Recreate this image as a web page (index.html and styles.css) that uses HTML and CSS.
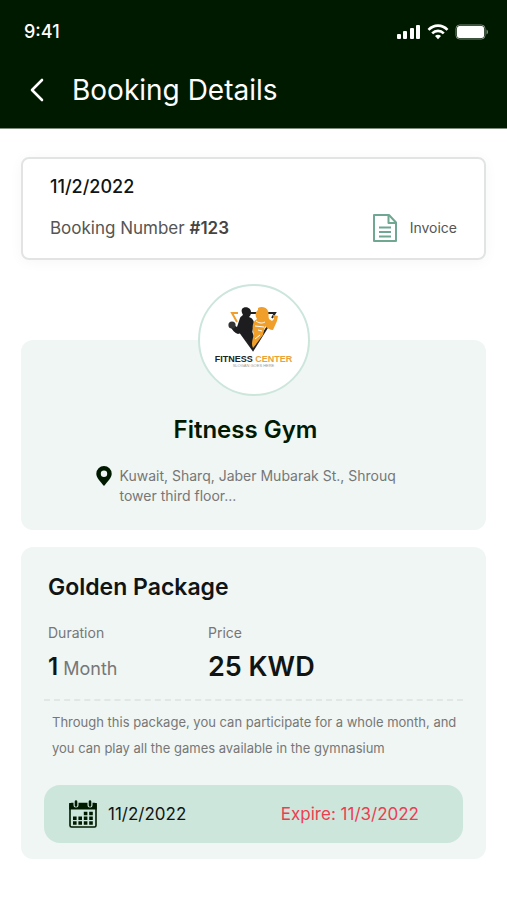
FILE: index.html
```html
<!DOCTYPE html>
<html lang="en">

<head>
    <meta charset="UTF-8">
    <meta name="viewport" content="width=device-width, initial-scale=1.0">
    <title>Booking Details</title>
    <link rel="stylesheet" href="styles.css">
</head>

<body>
    <header class="header">
        <div class="status-bar">
            <span class="time">9:41</span>
            <div class="status-icons">
                <svg width="24" height="16" viewBox="0 0 24 16" fill="#fff" aria-hidden="true">
                    <rect x="0" y="10" width="4" height="5" rx="1" />
                    <rect x="6" y="7" width="4" height="8" rx="1" />
                    <rect x="13" y="4" width="4" height="11" rx="1" />
                    <rect x="19" y="1" width="4" height="14" rx="1" />
                </svg>
                <svg width="22" height="16" viewBox="0 0 22 16" fill="none" stroke="#fff" stroke-width="2.6" aria-hidden="true">
                    <path d="M1.5 5.8C6.8.2 15.2.2 20.5 5.8" />
                    <path d="M5.2 9.300c3.300-3.300 8.300-3.300 11.600 0" />
                    <path d="M8 11.900c1.800-1.500 4.200-1.500 6 0l-3 3.300z" fill="#fff" stroke="none" />
                </svg>
                <svg width="34" height="16" viewBox="0 0 34 16" aria-hidden="true">
                    <rect x="1" y="1" width="29" height="14" rx="3.5" fill="none" stroke="#7d8c7d" />
                    <rect x="2" y="2" width="27" height="12" rx="2.5" fill="#fff" />
                    <path d="M31.5 5.500c2 .8 2 4.200 0 5z" fill="#7d8c7d" />
                </svg>
            </div>
        </div>
        <div class="title-bar">
            <a href="#" class="back" aria-label="Back">
                <svg width="16" height="24" viewBox="0 0 16 24" fill="none" stroke="#fff" stroke-width="2.6" stroke-linecap="round" stroke-linejoin="round">
                    <path d="M14 2L4 12l10 10" />
                </svg>
            </a>
            <h1>Booking Details</h1>
        </div>
    </header>

    <main>
        <section class="booking-card">
            <p class="booking-date">11/2/2022</p>
            <div class="booking-row">
                <p>Booking Number <strong>#123</strong></p>
                <a href="#" class="invoice">
                    <svg width="26" height="28" viewBox="0 0 26 28" fill="none" stroke="#6fa793" stroke-width="2" stroke-linejoin="round" aria-hidden="true">
                        <path d="M2 1h15l7 7.500V27H2z" />
                        <path d="M16.500 1v8H24M7 13.500h12M7 18h12M7 22.500h12" />
                    </svg>
                    Invoice
                </a>
            </div>
        </section>

        <section class="gym-card">
            <div class="gym-logo">
                <svg width="52" height="48" viewBox="0 0 52 46" aria-hidden="true">
                    <path d="M10 6H4l5 9" fill="none" stroke="#f0a02a" stroke-width="2" />
                    <path d="M17 6h30l-3 5M12 25l13 18 15-24" fill="none" stroke="#222" stroke-width="2" />
                    <path d="M14 27c3 3 8 12 11 16l3-9-5-12z" fill="#1d1d1f" />
                    <path d="M14 2c2-3 9-2 9 3 0 3-1 4-2 5 3 1 5 3 5 7l-2 9-1 9c-4-2-8-4-10-9l-3 1c-3-1-6-4-8-8l2-2 5 3 3-9c1-2 2-2 3-3-1-2-2-4-1-6z" fill="#1d1d1f" />
                    <circle cx="4" cy="18" r="3.6" fill="#333" />
                    <path d="M30 1c3-2 9-1 10 3 1 2 0 5 1 8l3 2 2-2-1-4 5 1-1 5-4 9c-3 0-6-2-8-4l-2 9-10 13c-3-6 2-11 0-17-1-5 0-10 4-12-2-3-2-7 1-9z" fill="#f0a02a" />
                    <path d="M28 14c4 3 7 2 9 1M27 19l9 1M30 23l4 1M27 32l5-4" fill="none" stroke="#fff" />
                </svg>
                <p class="logo-name">FITNESS <span>CENTER</span></p>
                <p class="logo-slogan">SLOGAN GOES HERE</p>
            </div>
            <h2>Fitness Gym</h2>
            <div class="address">
                <svg width="16" height="20" viewBox="0 0 16 20" fill="#001a00" fill-rule="evenodd" aria-hidden="true">
                    <path d="M8 0a7.700 7.700 0 0 0-7.700 7.700C.3 12 4.500 15.500 8 20c3.500-4.500 7.700-8 7.700-12.300A7.700 7.700 0 0 0 8 0zm0 4.500a3.200 3.200 0 1 1 0 6.400 3.200 3.200 0 0 1 0-6.400z" />
                </svg>
                <p>Kuwait, Sharq, Jaber Mubarak St., Shrouq tower third floor...</p>
            </div>
        </section>

        <section class="package-card">
            <h2>Golden Package</h2>
            <dl class="package-info">
                <div>
                    <dt>Duration</dt>
                    <dd><strong>1</strong> Month</dd>
                </div>
                <div>
                    <dt>Price</dt>
                    <dd class="price">25 KWD</dd>
                </div>
            </dl>
            <p class="description">Through this package, you can participate for a whole month, and you can play all the games available in the gymnasium</p>
            <div class="dates">
                <svg width="30" height="28" viewBox="0 0 30 28" aria-hidden="true">
                    <rect x="2" y="3.500" width="26" height="23.500" rx="1.500" fill="none" stroke="#001a00" stroke-width="1.600" />
                    <path d="M1.200 3h27.600v6.500H1.200z" fill="#001a00" />
                    <path d="M8 2v3M22 2v3" stroke="#cde6dc" stroke-width="5" stroke-linecap="round" />
                    <path d="M8 1.500v4M22 1.500v4" stroke="#001a00" stroke-width="2.600" stroke-linecap="round" />
                    <path d="M15.800 13.500h9M5 18.300h20M5 23h20" stroke="#001a00" stroke-width="3.400" stroke-dasharray="3.600 1.800" />
                </svg>
                <span>11/2/2022</span>
                <span class="expire">Expire: 11/3/2022</span>
            </div>
        </section>
    </main>
</body>

</html>
```

FILE: styles.css
```css
* {
    box-sizing: border-box;
}

body {
    font-family: Inter, "Liberation Sans", sans-serif;
    background-color: #fff;
    color: #101413;
    margin: 0;
}

h1,
h2,
p,
dl,
dd {
    margin: 0;
}

a {
    color: inherit;
    text-decoration: none;
}

.header {
    background-color: #001a00;
    color: #fff;
    padding: 20px 18px 20px 24px;
    border-bottom: 1px solid #7d8c7d;
}

.status-bar {
    display: flex;
    justify-content: space-between;
    align-items: center;
    height: 24px;
}

.time {
    font-size: 18px;
    font-weight: 500;
    line-height: 24px;
}

.status-icons {
    display: flex;
    gap: 6px;
}

.title-bar {
    display: flex;
    align-items: center;
    gap: 28px;
    margin-top: 28px;
    padding-left: 4px;
}

.back {
    display: flex;
}

h1 {
    font-size: 28px;
    font-weight: 400;
    line-height: 36px;
}

main {
    padding: 28px 21px 40px;
}

.booking-card {
    padding: 18px 27px 15px;
    border: 2px solid #e2e4e4;
    border-radius: 8px;
    box-shadow: 0 2px 14px rgba(0, 0, 0, 0.04);
}

.booking-date {
    font-size: 18px;
    font-weight: 500;
    line-height: 20px;
}

.booking-row {
    display: flex;
    justify-content: space-between;
    align-items: center;
    margin-top: 16px;
    color: #555;
    font-size: 17px;
    line-height: 30px;
}

.booking-row strong {
    color: #444;
    font-weight: 600;
}

.invoice {
    display: flex;
    align-items: center;
    gap: 12px;
    font-size: 14px;
}

.gym-card,
.package-card {
    background-color: #eff6f4;
    border-radius: 12px;
}

.gym-card {
    display: flex;
    flex-direction: column;
    align-items: center;
    margin-top: 80px;
    padding-bottom: 24px;
}

.gym-logo {
    display: flex;
    flex-direction: column;
    align-items: center;
    width: 112px;
    height: 112px;
    margin-top: -56px;
    padding-top: 20px;
    background-color: #fff;
    border: 2px solid #cde6dc;
    border-radius: 50%;
}

.logo-name {
    color: #222;
    font-family: "Liberation Sans", Arial, sans-serif;
    font-size: 9px;
    font-weight: 700;
    line-height: 10px;
    white-space: nowrap;
}

.logo-name span {
    color: #e8a23a;
}

.logo-slogan {
    color: #999;
    font-family: "Liberation Sans", Arial, sans-serif;
    font-size: 4px;
    line-height: 4px;
}

h2 {
    font-size: 24px;
    font-weight: 600;
    line-height: 32px;
}

.gym-card h2 {
    margin-top: 18px;
    padding-right: 16px;
    color: #001a00;
}

.address {
    display: flex;
    gap: 8px;
    margin-top: 20px;
    color: #777;
    font-size: 14px;
    line-height: 20px;
}

.address p {
    max-width: 292px;
}

.package-card {
    margin-top: 17px;
    padding: 24px 23px 16px;
}

.package-card h2,
.package-info {
    padding-left: 4px;
}

.package-card h2 {
    font-size: 23px;
}

.package-info {
    display: grid;
    grid-template-columns: 160px 1fr;
    margin-top: 20px;
}

.package-info dt {
    color: #777;
    font-size: 14px;
    line-height: 20px;
}

.package-info dd {
    margin-top: 8px;
    color: #777;
    font-size: 18px;
    line-height: 32px;
}

.package-info strong {
    color: #101413;
    font-size: 24px;
    font-weight: 600;
}

.package-info .price {
    color: #101413;
    font-size: 27px;
    font-weight: 600;
}

.description {
    margin-top: 14px;
    padding: 8px 0 8px 8px;
    border-top: 2px dashed #e0e7e5;
    color: #777;
    font-size: 13px;
    line-height: 26px;
}

.dates {
    display: flex;
    align-items: center;
    gap: 10px;
    margin-top: 16px;
    padding: 15px 44px 15px 24px;
    background-color: #cde6dc;
    border-radius: 16px;
    font-size: 17px;
    line-height: 24px;
}

.expire {
    margin-left: auto;
    color: #ee3d50;
}
```
